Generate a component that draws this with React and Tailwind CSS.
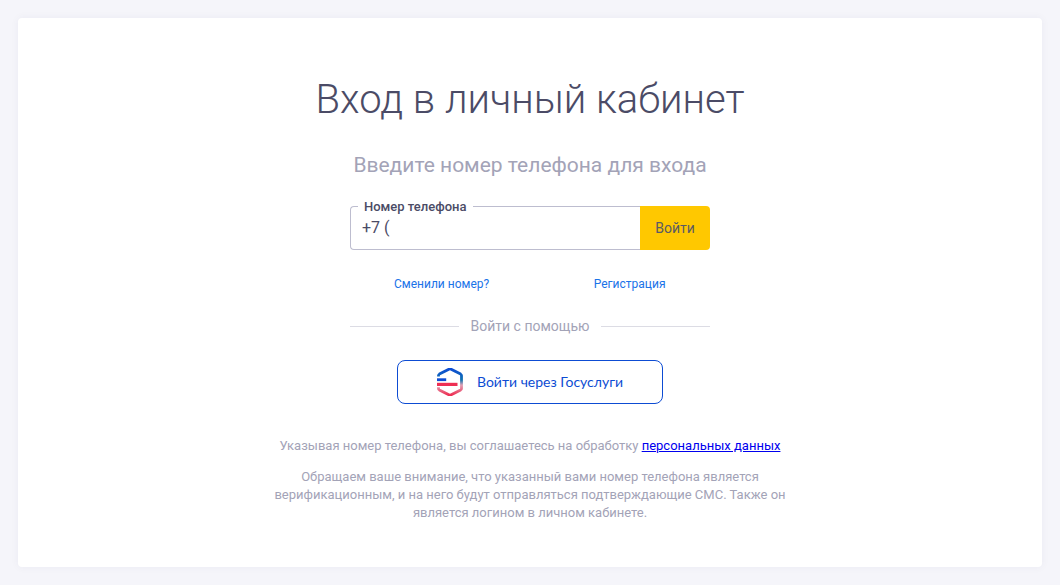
function GosuslugiLogo() {
    return (
        <svg viewBox="0 0 26 28" className="h-[28px] w-[26px]" aria-hidden="true">
            <defs>
                <linearGradient id="gosRing" x1="0" y1="0" x2="0" y2="1">
                    <stop offset="0" stopColor="#0d4cd3" />
                    <stop offset="0.42" stopColor="#0f72b0" />
                    <stop offset="0.62" stopColor="#e0a0b4" />
                    <stop offset="1" stopColor="#ee2f53" />
                </linearGradient>
            </defs>
            <path
                d="M1.5 8.6V7.6q0-1 .9-1.5L11.9 1.2q1.1-.6 2.2 0l9.5 4.9q.9.5.9 1.5v12.8q0 1-.9 1.5l-9.5 4.9q-1.1.6-2.2 0l-9.5-4.9q-.9-.5-.9-1.5v-1.2"
                fill="none"
                stroke="url(#gosRing)"
                strokeWidth="2.8"
            />
            <rect x="0" y="10.3" width="9.2" height="2.8" fill="#0d4cd3" />
            <rect x="0" y="14.8" width="20.5" height="3.2" fill="#ee2f53" />
        </svg>
    );
}

export default function App() {
    return (
        <div className="min-h-screen bg-[#f5f5fa] p-[18px] font-['Roboto',sans-serif]">
            <div className="flex h-[549px] flex-col items-center rounded-[4px] bg-white pt-[54px] shadow-[0_0_8px_rgba(40,40,90,0.05)]">
                <h1 className="text-[40px] leading-[56px] font-light text-[#4b4b66]">Вход в личный кабинет</h1>
                <p className="mt-[24px] text-[21px] leading-[26px] text-[#a3a3b7]">Введите номер телефона для входа</p>

                <div className="relative mt-[28px] flex h-[44px] w-[360px]">
                    <div className="flex flex-1 items-center rounded-l-[4px] border border-r-0 border-[#bdbdcf] pl-[11px] text-[16px] text-[#4b4b66]">
                        +7 (
                    </div>
                    <button type="button" className="w-[70px] rounded-r-[4px] bg-[#ffc800] text-[14px] text-[#5a5a64]">
                        Войти
                    </button>
                    <span className="absolute top-[-7px] left-[8px] bg-white px-[6px] text-[13px] leading-[15px] font-medium text-[#4b4b66]">
                        Номер телефона
                    </span>
                </div>

                <div className="mt-[26px] flex w-[360px] text-[12px] leading-[16px] text-[#1a73e8]">
                    <a className="ml-[44px]">Сменили номер?</a>
                    <a className="ml-[104.5px]">Регистрация</a>
                </div>

                <div className="mt-[25px] flex w-[360px] items-center gap-[12px] text-[14px] leading-[18px] text-[#a3a3b7]">
                    <div className="h-px flex-1 bg-[#dcdce4]" />
                    <span>Войти с помощью</span>
                    <div className="h-px flex-1 bg-[#dcdce4]" />
                </div>

                <button
                    type="button"
                    className="mt-[25px] flex h-[44px] w-[266px] items-center justify-center gap-[14px] rounded-[8px] border border-[#0d4cd3] bg-white font-['Lato',sans-serif] text-[14px] text-[#0d4cd3]"
                >
                    <GosuslugiLogo />
                    <span className="pb-[2px]">Войти через Госуслуги</span>
                </button>

                <p className="mt-[33px] text-[13px] leading-[18px] text-[#a3a3b7]">
                    Указывая номер телефона, вы соглашаетесь на обработку{' '}
                    <a className="text-[#0000ee] underline">персональных данных</a>
                </p>
                <p className="mt-[13px] w-[530px] text-center text-[13px] leading-[18px] text-[#a3a3b7]">
                    Обращаем ваше внимание, что указанный вами номер телефона является верификационным, и на него будут отправляться подтверждающие СМС. Также он является логином в личном кабинете.
                </p>
            </div>
        </div>
    );
}
